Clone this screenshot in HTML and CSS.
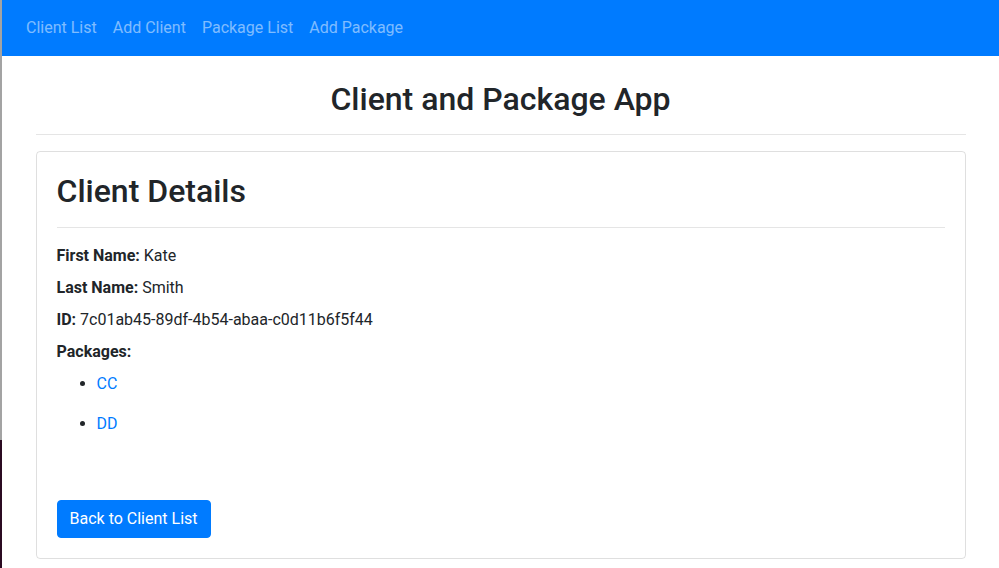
FILE: index.html
```html
<!DOCTYPE html>
<html lang="en">
<head>
<meta charset="utf-8">
<title>Client and Package App</title>
<link rel="stylesheet" href="styles.css">
</head>
<body>
<nav class="navbar">
  <a class="nav-link" href="#">Client List</a>
  <a class="nav-link" href="#">Add Client</a>
  <a class="nav-link" href="#">Package List</a>
  <a class="nav-link" href="#">Add Package</a>
</nav>
<main class="container">
  <h1 class="title">Client and Package App</h1>
  <hr class="rule">
  <section class="card">
    <h2 class="card-title">Client Details</h2>
    <hr class="rule">
    <p class="field"><strong>First Name:</strong> Kate</p>
    <p class="field"><strong>Last Name:</strong> Smith</p>
    <p class="field"><strong>ID:</strong> 7c01ab45-89df-4b54-abaa-c0d11b6f5f44</p>
    <p class="field"><strong>Packages:</strong></p>
    <ul class="packages">
      <li class="package"><a href="#" class="link">CC</a></li>
      <li class="package"><a href="#" class="link">DD</a></li>
    </ul>
    <div class="actions">
      <a href="#" class="btn">Back to Client List</a>
    </div>
  </section>
</main>
</body>
</html>
```

FILE: styles.css
```css
html {
  background: linear-gradient(to bottom, #a3a3a3 0, #a3a3a3 440px, #2b0b22 440px, #2b0b22 100%);
  min-height: 100%;
}
body {
  margin: 0 0 0 2px;
  min-height: 568px;
  background: #fff;
  font-family: Roboto, "Noto Sans", "Liberation Sans", sans-serif;
  font-size: 16px;
  line-height: 1.5;
  color: #212529;
}
.navbar {
  display: flex;
  align-items: center;
  height: 56px;
  box-sizing: border-box;
  padding: 8px 16px;
  background: #007bff;
}
.nav-link {
  padding: 8px;
  color: rgba(255, 255, 255, 0.5);
  text-decoration: none;
}
.container {
  max-width: 960px;
  margin: 0 auto;
  padding: 0 15px;
  box-sizing: border-box;
}
.title {
  margin: 24px 0 8px;
  font-size: 32px;
  font-weight: 500;
  line-height: 1.2;
  text-align: center;
}
.rule {
  margin: 16px 0;
  border: 0;
  border-top: 1px solid rgba(0, 0, 0, 0.1);
}
.card {
  border: 1px solid rgba(0, 0, 0, 0.125);
  border-radius: 4px;
  padding: 20px;
}
.card-title {
  margin: 0 0 8px;
  font-size: 32px;
  font-weight: 500;
  line-height: 1.2;
}
.field {
  margin: 0 0 8px;
}
.field strong {
  font-weight: 700;
}
.packages {
  margin: 0 0 16px;
  padding-left: 40px;
}
.package {
  margin: 8px 0 16px;
}
.link {
  color: #007bff;
  text-decoration: none;
}
.actions {
  margin-top: 64px;
}
.btn {
  display: inline-block;
  padding: 6px 12px;
  border: 1px solid #007bff;
  border-radius: 4px;
  background: #007bff;
  color: #fff;
  text-decoration: none;
  line-height: 1.5;
}
```
